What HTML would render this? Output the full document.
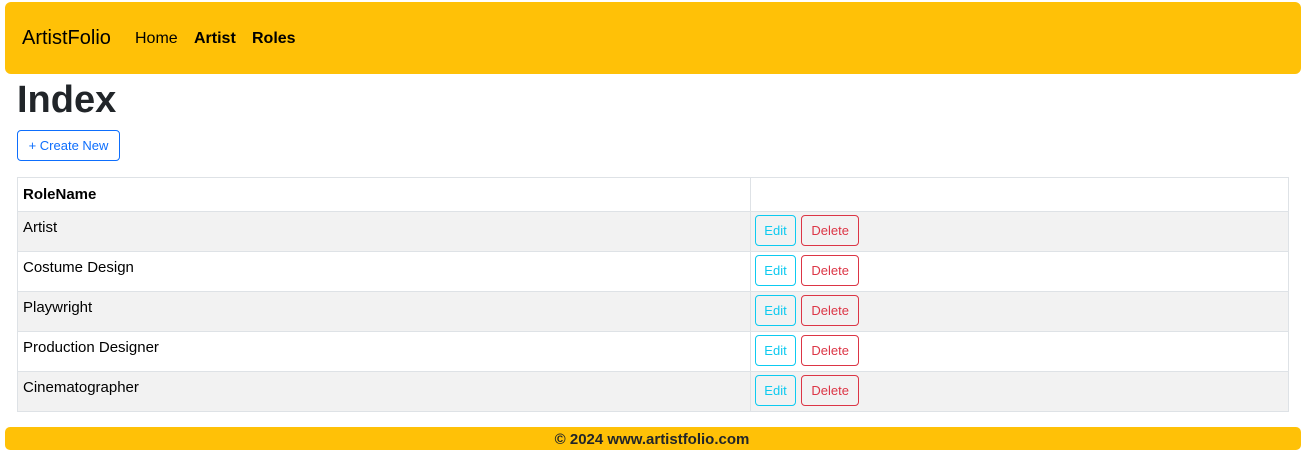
<!DOCTYPE html>
<html><head><style>
*{box-sizing:border-box;margin:0;padding:0}
body{width:1304px;height:454px;font-family:"Liberation Sans",sans-serif;background:#fff;color:#000;position:relative;overflow:hidden}
.nav{position:absolute;left:5px;top:2px;width:1296px;height:72px;background:#ffc107;border-radius:6px}
.brand{position:absolute;left:17px;top:25px;font-size:20px;color:#000}
.nav a{position:absolute;top:28px;font-size:16px;color:#000}
h1{position:absolute;left:17px;top:79px;font-size:38px;font-weight:bold;color:#212529}
.cn{position:absolute;left:17px;top:130px;width:103px;height:31px;border:1px solid #0d6efd;border-radius:4px;color:#0d6efd;font-size:13px;line-height:30px;text-align:center}
table{position:absolute;left:17px;top:177px;width:1272px;border-collapse:collapse;font-size:15px}
td,th{border:1px solid #dee2e6;padding:0 5px;text-align:left;vertical-align:top}
th{height:32px;line-height:33px;font-weight:bold}
td{height:40px;padding-top:7px}
tr:nth-child(even) td{background:#f2f2f2}
td:first-child{width:733px}
td:last-child{padding:3px 4px}
.b{display:inline-block;height:31px;line-height:30px;border-radius:4px;font-size:13px;margin-right:1px}
.e{border:1px solid #0dcaf0;color:#0dcaf0;width:41px;text-align:center}
.d{border:1px solid #dc3545;color:#dc3545;width:58px;text-align:center}
.ft{position:absolute;left:5px;top:427px;width:1296px;height:23px;background:#ffc107;border-radius:5px;text-align:center;font-weight:bold;font-size:15px;line-height:25px;color:#212529;text-indent:-2px}
</style></head><body>
<div class="nav"><span class="brand">ArtistFolio</span><a style="left:130px">Home</a><a style="left:189px;font-weight:bold">Artist</a><a style="left:247px;font-weight:bold">Roles</a></div>
<h1>Index</h1>
<div class="cn">+ Create New</div>
<table>
<tr><th>RoleName</th><th></th></tr>
<tr><td>Artist</td><td><span class="b e">Edit</span> <span class="b d">Delete</span></td></tr>
<tr><td>Costume Design</td><td><span class="b e">Edit</span> <span class="b d">Delete</span></td></tr>
<tr><td>Playwright</td><td><span class="b e">Edit</span> <span class="b d">Delete</span></td></tr>
<tr><td>Production Designer</td><td><span class="b e">Edit</span> <span class="b d">Delete</span></td></tr>
<tr><td>Cinematographer</td><td><span class="b e">Edit</span> <span class="b d">Delete</span></td></tr>
</table>
<div class="ft">© 2024 www.artistfolio.com</div>
</body></html>
